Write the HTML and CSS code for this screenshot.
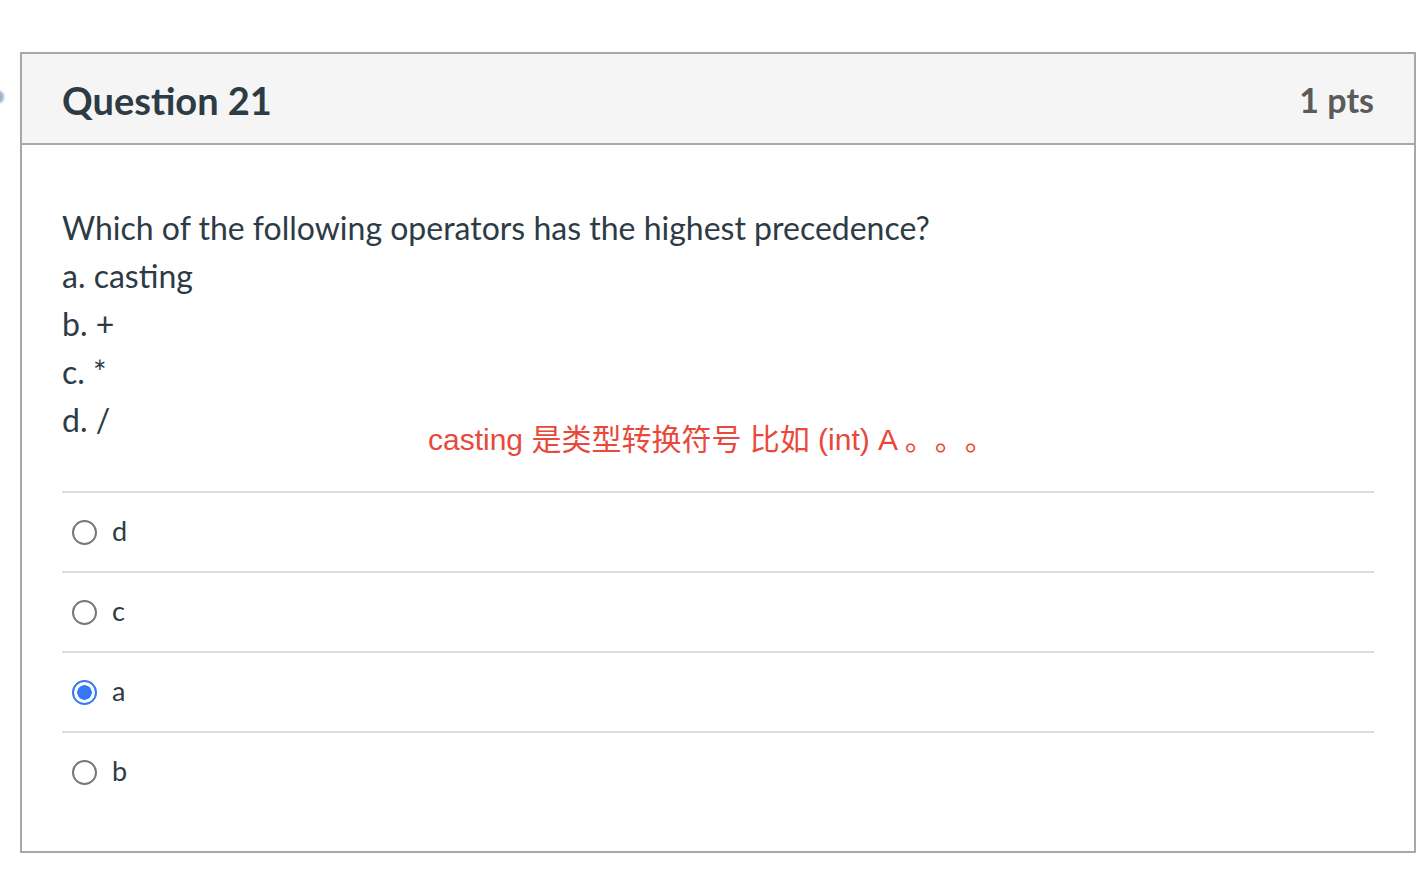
FILE: index.html
```html
<!DOCTYPE html>
<html lang="en">
<head>
<meta charset="utf-8">
<title>Question 21</title>
<link rel="stylesheet" href="styles.css">
</head>
<body>
<div class="page">
  <span class="side-dot"></span>
  <div class="question">
    <div class="q-header">
      <h2 class="q-title">Question 21</h2>
      <div class="q-points">1 pts</div>
    </div>
    <div class="q-body">
      <div class="q-text">
        <p>Which of the following operators has the highest precedence?</p>
        <p>a. casting</p>
        <p>b. +</p>
        <p>c. *</p>
        <p>d. /</p>
      </div>
      <div class="note">casting 是类型转换符号 比如 (int) A 。。。</div>
      <div class="answers">
        <label class="answer"><span class="radio"></span><span class="label">d</span></label>
        <label class="answer"><span class="radio"></span><span class="label">c</span></label>
        <label class="answer"><span class="radio checked"></span><span class="label">a</span></label>
        <label class="answer"><span class="radio"></span><span class="label">b</span></label>
      </div>
    </div>
  </div>
</div>
</body>
</html>
```

FILE: styles.css
```css
html, body {
  margin: 0;
  padding: 0;
  background: #ffffff;
}

.page {
  position: relative;
  padding: 52px 8px 0 20px;
  font-family: Lato, "Liberation Sans", sans-serif;
  color: #2d3b45;
}

.side-dot {
  position: absolute;
  left: -5px;
  top: 91px;
  width: 9px;
  height: 12px;
  border-radius: 50%;
  background: #9fb3c8;
  filter: blur(1px);
}

.question {
  width: 1396px;
  height: 801px;
  box-sizing: border-box;
  border: 2px solid #a8a8a8;
  display: flex;
  flex-direction: column;
}

.q-header {
  height: 89px;
  background: #f5f5f5;
  border-bottom: 2px solid #a8a8a8;
  padding: 0 40px 0 40px;
  display: flex;
  align-items: center;
  justify-content: space-between;
}

.q-title {
  margin: 0;
  font-size: 38px;
  font-weight: 700;
  color: #2d3b45;
  padding-top: 2px;
}

.q-points {
  font-size: 34px;
  font-weight: 700;
  color: #5b5b5b;
  padding-top: 2px;
}

.q-body {
  position: relative;
  padding: 59px 40px 40px 40px;
}

.q-text p {
  margin: 0;
  font-size: 32px;
  line-height: 48px;
}

.note {
  position: absolute;
  left: 406px;
  top: 277px;
  font-family: "Liberation Sans", "Noto Sans CJK SC", sans-serif;
  font-size: 30px;
  line-height: 36px;
  color: #e8493b;
  white-space: nowrap;
  text-spacing-trim: space-all;
}

.answers {
  margin-top: 47px;
}

.answer {
  display: flex;
  align-items: center;
  height: 78px;
  border-top: 2px solid #dddddd;
}

.radio {
  width: 25px;
  height: 25px;
  box-sizing: border-box;
  border: 2px solid #777777;
  border-radius: 50%;
  margin-left: 10px;
  margin-right: 15px;
  background: #ffffff;
}

.radio.checked {
  border-color: #3478f6;
  background: radial-gradient(circle, #3478f6 0 7px, #ffffff 7.5px);
}

.label {
  font-size: 27px;
  line-height: 30px;
  color: #2d3b45;
  padding-bottom: 3px;
}
```
